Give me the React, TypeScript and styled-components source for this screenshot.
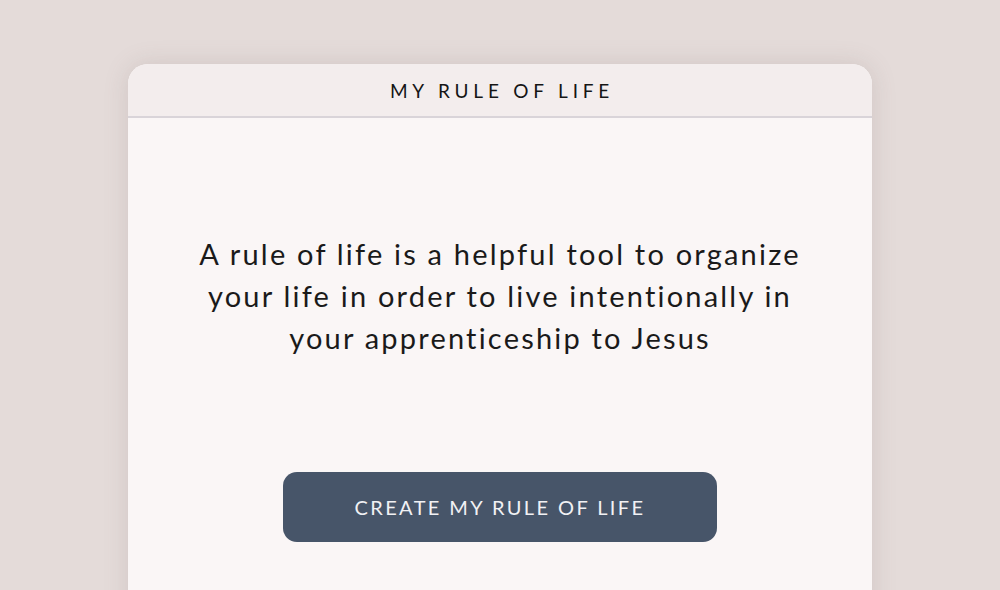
import React from 'react'
import styled, { createGlobalStyle } from 'styled-components'

const Global = createGlobalStyle`
  html, body {
    margin: 0;
    padding: 0;
    background: #e4dbd9;
    font-family: Lato, "Noto Sans", sans-serif;
    overflow: hidden;
  }
`

const Page = styled.div`
  width: 1000px;
  height: 590px;
  display: flex;
  justify-content: center;
  padding-top: 64px;
  box-sizing: border-box;
  overflow: hidden;
`

const Card = styled.div`
  width: 744px;
  height: 560px;
  flex-shrink: 0;
  background: #faf6f6;
  border-radius: 20px 20px 0 0;
  box-shadow: 0 0 24px rgba(120, 100, 100, 0.18);
  overflow: hidden;
  display: flex;
  flex-direction: column;
`

const Header = styled.div`
  height: 52px;
  background: #f3eded;
  border-bottom: 2px solid #d9d4d9;
  display: flex;
  align-items: center;
  justify-content: center;
  padding-left: 4px;
  font-size: 19px;
  letter-spacing: 4.8px;
  color: #151515;
`

const Body = styled.div`
  display: flex;
  flex-direction: column;
  align-items: center;
  padding-top: 115px;
`

const Intro = styled.p`
  margin: 0;
  width: 640px;
  text-align: center;
  font-size: 29px;
  line-height: 42px;
  letter-spacing: 2.2px;
  color: #1a1a1a;
`

const Button = styled.button`
  margin-top: 113px;
  width: 434px;
  height: 70px;
  border: none;
  border-radius: 14px;
  background: #475569;
  color: #f1f1f4;
  font-family: inherit;
  font-size: 20px;
  letter-spacing: 2.4px;
  cursor: pointer;
`

export default function App() {
  return (
    <>
      <Global />
      <Page>
        <Card>
          <Header>MY RULE OF LIFE</Header>
          <Body>
            <Intro>
              A rule of life is a helpful tool to organize your life in order to live intentionally in your
              apprenticeship to Jesus
            </Intro>
            <Button>CREATE MY RULE OF LIFE</Button>
          </Body>
        </Card>
      </Page>
    </>
  )
}
